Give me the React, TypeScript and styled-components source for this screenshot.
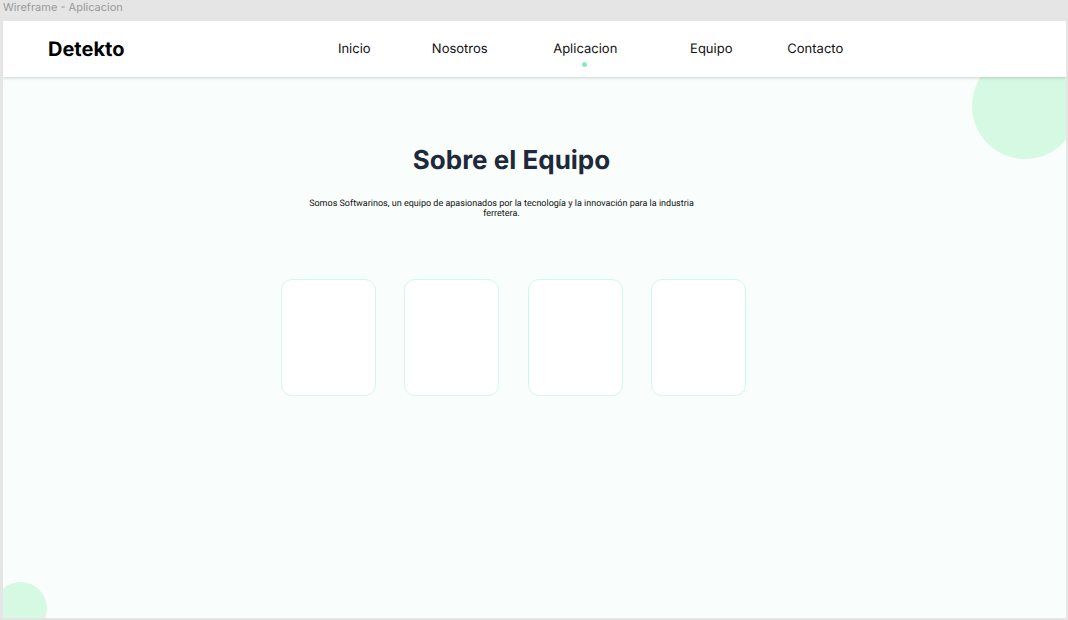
import React from "react";
import styled, { createGlobalStyle } from "styled-components";

const GlobalStyle = createGlobalStyle`
  * { box-sizing: border-box; }
  body {
    margin: 0;
    background: #e5e5e5;
    font-family: Inter, "Liberation Sans", sans-serif;
    text-rendering: geometricPrecision;
    color: #111111;
  }
`;

const Canvas = styled.div`
  display: flex;
  flex-direction: column;
  min-height: 100vh;
  padding: 0 2px 2px 3px;
`;

const FrameLabel = styled.div`
  height: 21px;
  font-size: 11px;
  line-height: 14px;
  color: #999999;
`;

const Frame = styled.div`
  position: relative;
  display: flex;
  flex: 1;
  flex-direction: column;
  overflow: hidden;
  background: #f9fefc;
`;

const Header = styled.header`
  position: relative;
  z-index: 1;
  display: grid;
  grid-template-columns: 29% 1fr;
  align-items: center;
  height: 56px;
  background: #ffffff;
  box-shadow: 0 1px 3px rgba(0, 0, 0, 0.18);
`;

const Brand = styled.a`
  padding-left: 45px;
  font-size: 20px;
  line-height: 24px;
  font-weight: 700;
  color: #000000;
  text-decoration: none;
`;

const Nav = styled.nav`
  display: grid;
  grid-template-columns: 86px 125px 126px 126px 82px;
  justify-items: center;
`;

const NavLink = styled.a<{ $active?: boolean }>`
  position: relative;
  font-size: 13px;
  line-height: 18px;
  color: #111111;
  text-decoration: none;

  &::after {
    content: "";
    display: ${(p) => (p.$active ? "block" : "none")};
    position: absolute;
    top: 22px;
    left: calc(50% - 3px);
    width: 5px;
    height: 5px;
    border-radius: 50%;
    background: #86efac;
  }
`;

const Circle = styled.div<{ $size: number; $corner: "top" | "bottom" }>`
  position: absolute;
  width: ${(p) => p.$size}px;
  height: ${(p) => p.$size}px;
  border-radius: 50%;
  background: #d5f9e3;
  ${(p) => (p.$corner === "top" ? "top: 32px; right: -12px;" : "bottom: -17px; left: -9px;")}
`;

const Content = styled.main`
  position: relative;
  display: flex;
  flex-direction: column;
  align-items: center;
  padding: 68px 42px 32px 0;
`;

const Title = styled.h1`
  margin: 0 4px 0 0;
  font-size: 26px;
  line-height: 32px;
  font-weight: 700;
  color: #1e293b;
`;

const Intro = styled.p`
  max-width: 400px;
  margin: 22px 24px 0 0;
  font-family: Roboto, Inter, sans-serif;
  font-size: 9px;
  line-height: 10px;
  text-align: center;
`;

const Team = styled.section`
  display: flex;
  justify-content: space-between;
  width: 465px;
  margin-top: 60px;
`;

const MemberCard = styled.article`
  width: 95px;
  height: 117px;
  border: 1px solid #d1fae5;
  border-radius: 11px;
  background: #ffffff;
`;

const links = ["Inicio", "Nosotros", "Aplicacion", "Equipo", "Contacto"];
const members = [1, 2, 3, 4];

export default function App() {
  return (
    <Canvas>
      <GlobalStyle />
      <FrameLabel>Wireframe - Aplicacion</FrameLabel>
      <Frame>
        <Header>
          <Brand href="#">Detekto</Brand>
          <Nav>
            {links.map((link) => (
              <NavLink key={link} href={`#${link.toLowerCase()}`} $active={link === "Aplicacion"}>
                {link}
              </NavLink>
            ))}
          </Nav>
        </Header>
        <Circle $size={106} $corner="top" />
        <Circle $size={53} $corner="bottom" />
        <Content>
          <Title>Sobre el Equipo</Title>
          <Intro>
            Somos Softwarinos, un equipo de apasionados por la tecnología y la innovación para la
            industria ferretera.
          </Intro>
          <Team>
            {members.map((member) => (
              <MemberCard key={member} />
            ))}
          </Team>
        </Content>
      </Frame>
    </Canvas>
  );
}
